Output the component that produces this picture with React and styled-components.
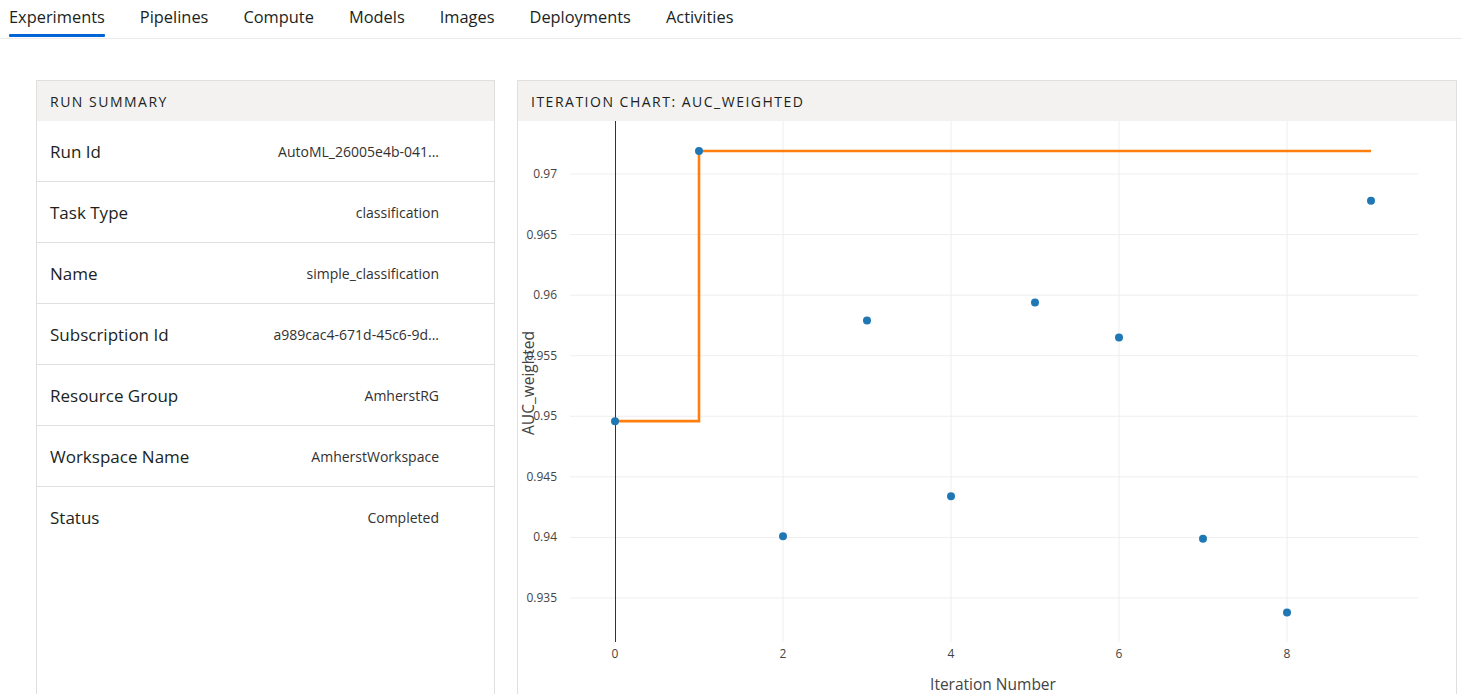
import React from 'react';
import styled, { createGlobalStyle } from 'styled-components';

const GlobalStyle = createGlobalStyle`
  html, body {
    margin: 0;
    padding: 0;
    background: #fff;
    overflow: hidden;
  }
  body {
    font-family: "Open Sans", "Noto Sans", sans-serif;
    color: #323130;
  }
`;

const Tabs = styled.nav`
  display: flex;
  gap: 35px;
  height: 38px;
  padding-left: 9px;
  border-bottom: 1px solid #edebe9;
`;

const Tab = styled.div`
  position: relative;
  font-size: 16.4px;
  line-height: 34px;
  color: #201f1e;

  &::after {
    content: '';
    display: ${p => (p.active ? 'block' : 'none')};
    position: absolute;
    left: 0;
    right: 0;
    bottom: 1px;
    height: 3px;
    background: #0063d6;
    border-radius: 1px;
  }
`;

const Content = styled.main`
  display: grid;
  grid-template-columns: 459px 940px;
  gap: 22px;
  padding: 41px 0 0 36px;
`;

const Panel = styled.section`
  border: 1px solid #e1dfdd;
  min-height: 640px;
  background: #fff;
`;

const PanelHeader = styled.header`
  height: 40px;
  display: flex;
  align-items: center;
  padding-left: 13px;
  background: #f3f2f1;
  font-size: 14px;
  letter-spacing: 1.5px;
  text-transform: uppercase;
  color: #201f1e;
`;

const Row = styled.div`
  display: flex;
  align-items: center;
  justify-content: space-between;
  height: 60px;
  padding: 0 55px 0 13px;
  border-bottom: ${p => (p.last ? 'none' : '1px solid #e1dfdd')};
`;

const Label = styled.span`
  font-size: 17px;
  color: #201f1e;
`;

const Value = styled.span`
  font-size: 14px;
  color: #323130;
`;

const ChartSvg = styled.svg`
  display: block;
  overflow: visible;
  font-family: "Open Sans", "Noto Sans", sans-serif;
`;

const summary = [
  ['Run Id', 'AutoML_26005e4b-041...'],
  ['Task Type', 'classification'],
  ['Name', 'simple_classification'],
  ['Subscription Id', 'a989cac4-671d-45c6-9d...'],
  ['Resource Group', 'AmherstRG'],
  ['Workspace Name', 'AmherstWorkspace'],
  ['Status', 'Completed'],
];

const points = [0.9496, 0.9719, 0.9401, 0.9579, 0.9434, 0.9594, 0.9565, 0.9399, 0.9338, 0.9678];
const yTicks = [0.97, 0.965, 0.96, 0.955, 0.95, 0.945, 0.94, 0.935];

const px = i => 97 + 84 * i;
const py = v => 53 + (0.97 - v) * 12114;

function IterationChart() {
  let best = -Infinity;
  const steps = points.map(v => (best = Math.max(best, v)));
  let d = `M${px(0)},${py(steps[0])}`;
  for (let i = 1; i < steps.length; i++) {
    d += ` H${px(i)} V${py(steps[i])}`;
  }

  return (
    <ChartSvg width="938" height="580" viewBox="0 0 938 580">
      {yTicks.map(t => (
        <g key={t}>
          <line x1="52" x2="900" y1={py(t)} y2={py(t)} stroke="#eeeeee" strokeWidth="1" />
          <text x="39" y={py(t) + 4} textAnchor="end" fontSize="12" fill="#444">
            {t}
          </text>
        </g>
      ))}
      {[2, 4, 6, 8].map(i => (
        <line key={i} x1={px(i)} x2={px(i)} y1="0" y2="521" stroke="#eeeeee" strokeWidth="1" />
      ))}
      <line x1={px(0) + 0.5} x2={px(0) + 0.5} y1="0" y2="521" stroke="#333" strokeWidth="1" />
      {[0, 2, 4, 6, 8].map(i => (
        <text key={i} x={px(i)} y="537" textAnchor="middle" fontSize="12" fill="#444">
          {i}
        </text>
      ))}
      <path d={d} fill="none" stroke="#ff7f0e" strokeWidth="2.6" />
      {points.map((v, i) => (
        <circle key={i} cx={px(i)} cy={py(v)} r="4" fill="#1f77b4" />
      ))}
      <text x="475" y="569" textAnchor="middle" fontSize="15.5" fill="#444">
        Iteration Number
      </text>
      <text
        x="0"
        y="0"
        transform="translate(16,262) rotate(-90)"
        textAnchor="middle"
        fontSize="15.5"
        fill="#444"
      >
        AUC_weighted
      </text>
    </ChartSvg>
  );
}

const tabs = ['Experiments', 'Pipelines', 'Compute', 'Models', 'Images', 'Deployments', 'Activities'];

export default function App() {
  return (
    <>
      <GlobalStyle />
      <Tabs>
        {tabs.map((t, i) => (
          <Tab key={t} active={i === 0}>
            {t}
          </Tab>
        ))}
      </Tabs>
      <Content>
        <Panel>
          <PanelHeader>Run Summary</PanelHeader>
          {summary.map(([k, v], i) => (
            <Row key={k} last={i === summary.length - 1}>
              <Label>{k}</Label>
              <Value>{v}</Value>
            </Row>
          ))}
        </Panel>
        <Panel>
          <PanelHeader>Iteration Chart: AUC_weighted</PanelHeader>
          <IterationChart />
        </Panel>
      </Content>
    </>
  );
}
